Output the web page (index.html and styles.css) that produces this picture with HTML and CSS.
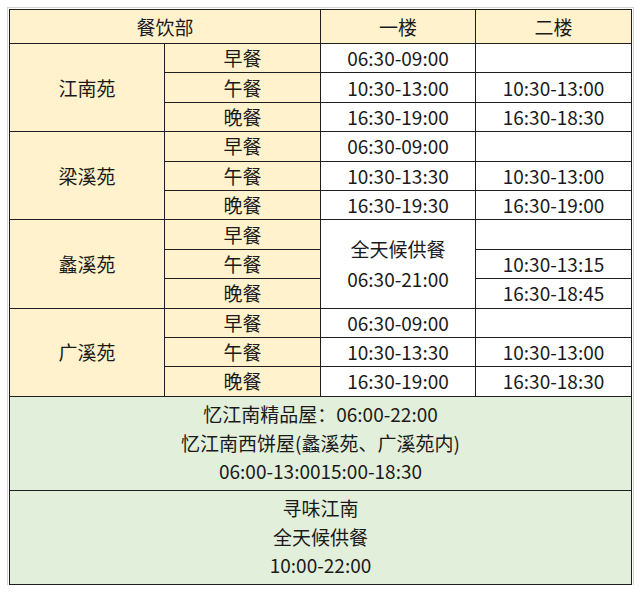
FILE: index.html
```html
<!DOCTYPE html>
<html lang="zh">
<head>
<meta charset="utf-8">
<link rel="stylesheet" href="styles.css">
</head>
<body>
<table class="sched">
  <colgroup>
    <col class="c1"><col class="c2"><col class="c3"><col class="c4">
  </colgroup>
  <tr class="head">
    <td colspan="2" class="y">餐饮部</td>
    <td class="y">一楼</td>
    <td class="y">二楼</td>
  </tr>
  <tr><td rowspan="3" class="y">江南苑</td><td class="y">早餐</td><td>06:30-09:00</td><td></td></tr>
  <tr><td class="y">午餐</td><td>10:30-13:00</td><td>10:30-13:00</td></tr>
  <tr><td class="y">晚餐</td><td>16:30-19:00</td><td>16:30-18:30</td></tr>
  <tr><td rowspan="3" class="y">梁溪苑</td><td class="y">早餐</td><td>06:30-09:00</td><td></td></tr>
  <tr><td class="y">午餐</td><td>10:30-13:30</td><td>10:30-13:00</td></tr>
  <tr><td class="y">晚餐</td><td>16:30-19:30</td><td>16:30-19:00</td></tr>
  <tr><td rowspan="3" class="y">蠡溪苑</td><td class="y">早餐</td><td rowspan="3" class="multi">全天候供餐<br>06:30-21:00</td><td></td></tr>
  <tr><td class="y">午餐</td><td>10:30-13:15</td></tr>
  <tr><td class="y">晚餐</td><td>16:30-18:45</td></tr>
  <tr><td rowspan="3" class="y">广溪苑</td><td class="y">早餐</td><td>06:30-09:00</td><td></td></tr>
  <tr><td class="y">午餐</td><td>10:30-13:30</td><td>10:30-13:00</td></tr>
  <tr><td class="y">晚餐</td><td>16:30-19:00</td><td>16:30-18:30</td></tr>
  <tr class="green"><td colspan="4" class="g">忆江南精品屋：06:00-22:00<br>忆江南西饼屋(蠡溪苑、广溪苑内)<br>06:00-13:0015:00-18:30</td></tr>
  <tr class="green"><td colspan="4" class="g">寻味江南<br>全天候供餐<br>10:00-22:00</td></tr>
</table>
</body>
</html>
```

FILE: styles.css
```css
html, body {
  margin: 0;
  padding: 0;
  background: #ffffff;
}
body {
  padding: 9px 0 0 9px;
  font-family: "Noto Sans CJK SC", "Noto Sans", sans-serif;
  color: #1a1a1a;
}
.sched {
  border-collapse: collapse;
  width: 622px;
  table-layout: fixed;
  font-size: 19px;
  box-shadow: 0 0 0 1px #fff, 0 0 0 2px #d4d4d4;
}
.c1 { width: 155px; }
.c2 { width: 156px; }
.c3 { width: 155px; }
.c4 { width: 156px; }
.sched td {
  border: 1px solid #1f1f1f;
  text-align: center;
  vertical-align: middle;
  padding: 0;
  height: 28.4px;
  line-height: 24px;
  background: #ffffff;
}
.sched tr.head td {
  height: 33px;
}
.sched td.y {
  background: #fff2cc;
}
.sched td.multi {
  line-height: 30px;
}
.sched td.g {
  background: #e2efda;
  height: 93px;
  line-height: 28.5px;
}
```
